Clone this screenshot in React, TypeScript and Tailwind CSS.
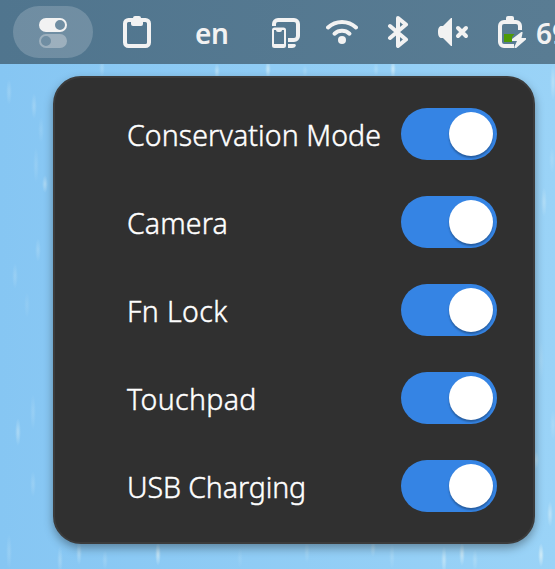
import type { ReactNode } from "react";

type Streak = { x: number; y: number; h: number; o: number };

const streaks: Streak[] = [
  { x: 9, y: 92, h: 26, o: 0.22 },
  { x: 34, y: 106, h: 26, o: 0.25 },
  { x: 41, y: 130, h: 26, o: 0.14 },
  { x: 36, y: 165, h: 36, o: 0.16 },
  { x: 45, y: 184, h: 18, o: 0.4 },
  { x: 38, y: 250, h: 24, o: 0.22 },
  { x: 15, y: 276, h: 26, o: 0.2 },
  { x: 27, y: 305, h: 26, o: 0.12 },
  { x: 33, y: 412, h: 36, o: 0.18 },
  { x: 18, y: 432, h: 28, o: 0.4 },
  { x: 33, y: 484, h: 26, o: 0.2 },
  { x: 9, y: 552, h: 36, o: 0.2 },
  { x: 60, y: 560, h: 28, o: 0.28 },
  { x: 79, y: 553, h: 24, o: 0.38 },
  { x: 105, y: 560, h: 20, o: 0.2 },
  { x: 158, y: 554, h: 24, o: 0.65 },
  { x: 240, y: 558, h: 20, o: 0.12 },
  { x: 307, y: 552, h: 22, o: 0.2 },
  { x: 373, y: 548, h: 18, o: 0.3 },
  { x: 392, y: 556, h: 26, o: 0.2 },
  { x: 444, y: 560, h: 28, o: 0.5 },
  { x: 462, y: 554, h: 24, o: 0.6 },
  { x: 475, y: 560, h: 22, o: 0.25 },
  { x: 541, y: 555, h: 24, o: 0.75 },
  { x: 550, y: 514, h: 26, o: 0.48 },
  { x: 536, y: 460, h: 18, o: 0.4 },
  { x: 544, y: 202, h: 30, o: 0.32 },
  { x: 553, y: 82, h: 36, o: 0.4 },
  { x: 552, y: 160, h: 26, o: 0.18 },
  { x: 541, y: 360, h: 40, o: 0.14 },
  { x: 553, y: 425, h: 30, o: 0.2 },
  { x: 102, y: 68, h: 18, o: 0.25 },
  { x: 217, y: 71, h: 16, o: 0.45 },
  { x: 268, y: 69, h: 18, o: 0.6 },
  { x: 393, y: 69, h: 18, o: 0.65 },
  { x: 376, y: 69, h: 14, o: 0.25 },
  { x: 305, y: 71, h: 12, o: 0.2 },
];

function Wallpaper() {
  return (
    <svg className="absolute inset-0 h-full w-full" viewBox="0 0 555 569" aria-hidden="true">
      <defs>
        <radialGradient id="drop">
          <stop offset="0" stopColor="#e6f5f7" />
          <stop offset="1" stopColor="#e6f5f7" stopOpacity="0" />
        </radialGradient>
      </defs>
      {streaks.map((s, i) => (
        <ellipse key={i} cx={s.x} cy={s.y} rx="3" ry={s.h / 2} fill="url(#drop)" opacity={s.o} />
      ))}
    </svg>
  );
}

function Icon({ children }: { children: ReactNode }) {
  return (
    <svg className="size-8 shrink-0" viewBox="0 0 32 32" fill="none" aria-hidden="true">
      {children}
    </svg>
  );
}

function TogglesIcon() {
  return (
    <Icon>
      <path fill="#f2f2f2" fillRule="evenodd" d="M9 2h14a7 7 0 0 1 0 14H9A7 7 0 0 1 9 2Zm14 2a5 5 0 1 0 0 10a5 5 0 0 0 0-10Z" />
      <path fill="#f2f2f2" fillOpacity=".35" fillRule="evenodd" d="M9 18h14a7 7 0 0 1 0 14H9A7 7 0 0 1 9 18Zm0 2a5 5 0 1 0 0 10a5 5 0 0 0 0-10Z" />
    </Icon>
  );
}

function ClipboardIcon() {
  return (
    <Icon>
      <rect x="4" y="4" width="24" height="26" rx="3.5" stroke="#f2f2f2" strokeWidth="4" />
      <path fill="#f2f2f2" d="M10 3h2V2a2 2 0 0 1 2-2h4a2 2 0 0 1 2 2v1h2v5a2 2 0 0 1-2 2h-8a2 2 0 0 1-2-2Z" />
    </Icon>
  );
}

function DevicesIcon() {
  return (
    <Icon>
      <path stroke="#f2f2f2" strokeWidth="4" d="M4 10V8a4 4 0 0 1 4-4h16a4 4 0 0 1 4 4v12a4 4 0 0 1-4 4h-6" />
      <path fill="#f2f2f2" fillRule="evenodd" d="M4.500 11.500h9A2.500 2.500 0 0 1 16 14v15.500a2.500 2.500 0 0 1-2.500 2.500h-9A2.500 2.500 0 0 1 2 29.500V14a2.500 2.500 0 0 1 2.500-2.500ZM4 14v14h10V14h-2a2 2 0 0 1-2 2H8a2 2 0 0 1-2-2Z" />
      <path fill="#f2f2f2" d="M18 28h6.500c2.500 0 1.500 4-2.500 4h-4Z" />
    </Icon>
  );
}

function WifiIcon() {
  return (
    <Icon>
      <g stroke="#f2f2f2" strokeWidth="4" strokeLinecap="round">
        <path d="M2 11.500a20.500 20.500 0 0 1 28 0" />
        <path d="M8.500 17.700a11 11 0 0 1 15 0" />
      </g>
      <circle cx="16" cy="24" r="4" fill="#f2f2f2" />
    </Icon>
  );
}

function BluetoothIcon() {
  return (
    <Icon>
      <path stroke="#f2f2f2" strokeWidth="4" strokeLinecap="round" strokeLinejoin="round" d="M8 10l16 13.500L16 30V2l8 6.500L8 22" />
    </Icon>
  );
}

function MutedIcon() {
  return (
    <Icon>
      <path fill="#f2f2f2" d="M3.500 10H5l8-8h1v28h-1l-8-8H3.500C1 22 0 19.500 0 16s1-6 3.500-6Z" />
      <path stroke="#f2f2f2" strokeWidth="4" strokeLinecap="round" d="M20 12l8 8m0-8l-8 8" />
    </Icon>
  );
}

function BatteryIcon() {
  return (
    <Icon>
      <path fill="#f2f2f2" d="M12 5V2a2 2 0 0 1 2-2h4a2 2 0 0 1 2 2v3Z" />
      <path stroke="#f2f2f2" strokeWidth="4" d="M26 14V10a4 4 0 0 0-4-4H10a4 4 0 0 0-4 4v16a4 4 0 0 0 4 4h10" />
      <path fill="#4e9a06" d="M10 18h10.500L18 21v5h-8Z" />
      <path fill="#f2f2f2" d="M27.300 16l-9.300 7v2h5L20.500 30.500V32h1.700L32 23.500V22h-4.500l1-4.800V16Z" />
    </Icon>
  );
}

function TopBar() {
  return (
    <header className="relative flex h-16 items-start overflow-hidden bg-linear-to-r from-[#50758e] to-[#597c93] pl-[13px] text-[28px] text-[#f2f2f2]">
      <div className="mt-1.5 flex h-13 w-20 shrink-0 items-center justify-center rounded-full bg-white/18">
        <TogglesIcon />
      </div>
      <div className="mt-4 ml-7 flex shrink-0 items-center">
        <ClipboardIcon />
        <span className="ml-[42px] w-[75px] pt-0.5 leading-7 font-semibold tracking-[-0.5px]">en</span>
        <div className="flex gap-6">
          <DevicesIcon />
          <WifiIcon />
          <BluetoothIcon />
          <MutedIcon />
          <BatteryIcon />
        </div>
        <span className="ml-[10px] pt-0.5 leading-7 font-semibold">69</span>
      </div>
    </header>
  );
}

const settings = [
  { label: "Conservation Mode", spacing: "tracking-[0.09px]" },
  { label: "Camera", spacing: "tracking-[0.1px]" },
  { label: "Fn Lock", spacing: "tracking-[0.4px]" },
  { label: "Touchpad", spacing: "tracking-[0.35px]" },
  { label: "USB Charging", spacing: "tracking-[-0.1px]" },
];

function Switch({ label }: { label: string }) {
  return (
    <button
      type="button"
      role="switch"
      aria-checked="true"
      aria-label={label}
      className="flex h-13 w-24 shrink-0 items-center justify-end rounded-full bg-[#3584e4] p-1"
    >
      <span className="size-11 rounded-full bg-white shadow-[0_2px_2px_rgba(0,0,0,0.3)]" />
    </button>
  );
}

export default function App() {
  return (
    <main className="relative h-[569px] w-[555px] overflow-hidden bg-linear-to-r from-[#86c6f3] to-[#9ad3f7] font-['Noto_Sans',sans-serif]">
      <Wallpaper />
      <TopBar />
      <section className="relative mt-3 ml-[53px] flex h-[468px] w-[482px] flex-col gap-9 rounded-[28px] border-2 border-[#3b3b3b] bg-[#303030] pt-[30px] pr-9 pl-[72px] shadow-[0_4px_10px_rgba(0,0,0,0.35)]">
        {settings.map(({ label, spacing }) => (
          <div key={label} className="flex h-13 shrink-0 items-center justify-between">
            <span className={`pt-px text-[28.500px] leading-13 font-light whitespace-nowrap text-white [-webkit-text-stroke:0.45px_white] ${spacing}`}>{label}</span>
            <Switch label={label} />
          </div>
        ))}
      </section>
    </main>
  );
}
